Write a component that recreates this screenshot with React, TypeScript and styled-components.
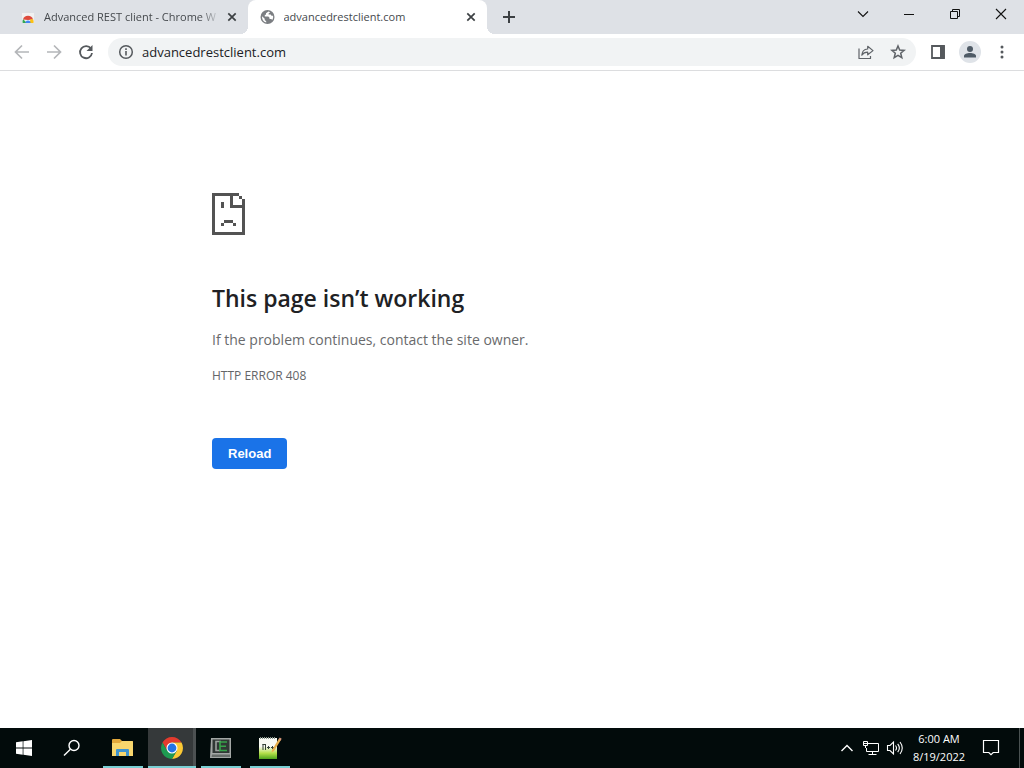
import React from 'react';
import styled, { createGlobalStyle, css } from 'styled-components';

const GlobalStyle = createGlobalStyle`
  *, *::before, *::after { box-sizing: border-box; }
  body { margin: 0; background: #fff; }
  button, input { font: inherit; }
`;

const Screen = styled.div`
  display: flex;
  flex-direction: column;
  min-height: 100vh;
  font-family: 'Open Sans', 'Noto Sans', sans-serif;
  color: #202124;
`;

/* Tab strip */

const TabStrip = styled.header`
  display: flex;
  align-items: stretch;
  height: 34px;
  background: #dee1e6;
`;

const TabList = styled.div`
  display: flex;
  flex: 0 1 487px;
  min-width: 0;
  padding-left: 8px;
`;

const Tab = styled.div<{ $active?: boolean }>`
  position: relative;
  display: flex;
  align-items: center;
  flex: 1 1 0;
  min-width: 0;
  padding: 0 10px 0 12px;
  border-radius: 8px 8px 0 0;
  color: #45494d;
  ${({ $active }) =>
    $active &&
    css`
      background: #fff;
      &::before,
      &::after {
        content: '';
        position: absolute;
        bottom: 0;
        width: 8px;
        height: 8px;
      }
      &::before {
        right: 100%;
        background: radial-gradient(circle at 0 0, transparent 8px, #fff 8px);
      }
      &::after {
        left: 100%;
        background: radial-gradient(circle at 100% 0, transparent 8px, #fff 8px);
      }
    `}
`;

const TabTitle = styled.span<{ $fade?: boolean }>`
  flex: 1;
  min-width: 0;
  margin: 0 6px 0 8px;
  overflow: hidden;
  white-space: nowrap;
  font-size: 11px;
  line-height: 16px;
  ${({ $fade }) =>
    $fade &&
    css`
      mask-image: linear-gradient(to right, #000 calc(100% - 20px), transparent);
    `}
`;

const IconButton = styled.button<{ $w?: number; $h?: number }>`
  display: flex;
  align-items: center;
  justify-content: center;
  flex: none;
  width: ${({ $w = 32 }) => $w}px;
  height: ${({ $h = 32 }) => $h}px;
  padding: 0;
  border: 0;
  background: none;
  color: #5f6368;
`;

const NewTab = styled(IconButton)`
  margin-left: 6px;
  align-self: center;
  color: #3c4043;
`;

const WindowControls = styled.div`
  display: flex;
  margin-left: auto;
  button {
    color: #111;
  }
`;

/* Toolbar */

const Toolbar = styled.div`
  display: flex;
  align-items: center;
  height: 37px;
  padding: 0 6px;
  border-bottom: 1px solid #dcdddf;
  background: #fff;
`;

const AddressBar = styled.form`
  display: flex;
  align-items: center;
  flex: 1;
  min-width: 0;
  height: 28px;
  margin: 0 6px;
  padding: 0 2px 0 10px;
  border-radius: 14px;
  background: #f1f3f4;
`;

const AddressInput = styled.input`
  flex: 1;
  min-width: 0;
  margin-left: 8px;
  padding: 0;
  border: 0;
  outline: 0;
  background: none;
  color: #202124;
  font-size: 13px;
  line-height: 20px;
`;

const Avatar = styled.span`
  display: flex;
  align-items: center;
  justify-content: center;
  width: 22px;
  height: 22px;
  border-radius: 50%;
  background: #dfe3e8;
`;

/* Error page */

const Page = styled.main`
  flex: 1;
  padding: 122px 24px 48px;
`;

const ErrorContent = styled.section`
  max-width: 600px;
  margin: 0 auto;
`;

const Heading = styled.h1`
  margin: 47px 0 14px;
  font-size: 23px;
  font-weight: 600;
  line-height: 32px;
`;

const Message = styled.p`
  margin: 0;
  color: #696a6c;
  font-size: 14px;
  line-height: 24px;
`;

const ErrorCode = styled.p`
  margin: 12px 0 0;
  color: #646568;
  font-size: 12px;
  line-height: 24px;
`;

const ReloadButton = styled.button`
  display: block;
  margin-top: 50px;
  padding: 0 16px;
  border: 0;
  border-radius: 4px;
  background: #1a73e8;
  color: #fff;
  font-family: 'Liberation Sans', sans-serif;
  font-size: 13px;
  font-weight: 700;
  line-height: 31px;
`;

/* Taskbar */

const Taskbar = styled.footer`
  display: flex;
  height: 40px;
  background: #020b0b;
  color: #fff;
`;

const TaskButton = styled.button<{ $running?: boolean; $active?: boolean }>`
  display: flex;
  align-items: center;
  justify-content: center;
  flex: none;
  width: ${({ $running }) => ($running ? 40 : 48)}px;
  height: 40px;
  padding: 0;
  border: 0;
  background: none;
  color: #fff;
  ${({ $running }) => $running && 'box-shadow: inset 0 -2px #79cfd3;'}
  ${({ $active }) =>
    $active && 'width: 48px; margin: 0 -4px; background: linear-gradient(to right, #35393a 45px, #4c5152 45px);'}
`;

const RunningApps = styled.div`
  display: flex;
  margin-left: 7px;
  gap: 9px;
`;

const Tray = styled.div`
  display: flex;
  align-items: center;
  margin-left: auto;
  margin-right: 4px;
  padding-right: 8px;
  border-right: 1px solid #4a5252;
  button {
    color: #fff;
  }
`;

const Clock = styled.time`
  width: 64px;
  font-size: 11px;
  line-height: 18px;
  text-align: center;
  white-space: nowrap;
`;

/* Icons */

const StoreIcon = () => (
  <svg width="16" height="16" viewBox="0 0 16 16" aria-hidden="true">
    <path d="M2 4h12v10H2z" fill="#f1f1f1" />
    <path d="M6 4V3h4v1" fill="none" stroke="#ddd" />
    <path d="M3 10.500a5.200 5.200 0 0 1 10 0L8 11z" fill="#de4a3c" />
    <path d="M2.600 14a5.600 5.600 0 0 1 .5-3.800L7 14z" fill="#35a853" />
    <path d="M9.500 14l1-3.700h2.600a6 6 0 0 1 .4 3.700z" fill="#fbc116" />
    <path d="M5.400 14a2.600 2.600 0 0 1 5.200 0z" fill="#4285f4" />
  </svg>
);

const GlobeIcon = () => (
  <svg width="16" height="16" viewBox="0 0 16 16" aria-hidden="true">
    <circle cx="7.500" cy="8" r="7" fill="#7b7e82" />
    <path d="M8.400 2.600 6 4.300v1.500H4.800v1.700h3.500l1.200 1.200v1.400h1.800l.9.900a5.400 5.400 0 0 0 .9-4.300l-1.600.1-.8-1.200H8.600V4.400l1.600-1.100zM2.100 7.200l2.600 2.600v1.200l1.500 1.300v1.200A5.400 5.400 0 0 1 2.100 7.200z" fill="#fff" />
  </svg>
);

const CloseIcon = () => (
  <svg width="10" height="10" viewBox="0 0 10 10" fill="none" stroke="#3c4043" strokeWidth="1.700" aria-hidden="true">
    <path d="m1.300 1.300 7.400 7.400M8.700 1.300 1.300 8.700" />
  </svg>
);

const PlusIcon = () => (
  <svg width="14" height="14" viewBox="0 0 14 14" fill="none" stroke="currentColor" strokeWidth="2" aria-hidden="true">
    <path d="M7 1v12M1 7h12" />
  </svg>
);

const ChevronIcon = () => (
  <svg width="12" height="12" viewBox="0 0 12 12" fill="none" stroke="currentColor" strokeWidth="1.100" aria-hidden="true">
    <path d="m1 3.500 5 5 5-5" />
  </svg>
);

const MinimizeIcon = () => (
  <svg width="12" height="12" viewBox="0 0 12 12" fill="none" stroke="currentColor" aria-hidden="true">
    <path d="M1 6.500h10" />
  </svg>
);

const RestoreIcon = () => (
  <svg width="12" height="12" viewBox="0 0 12 12" fill="none" stroke="currentColor" aria-hidden="true">
    <path d="M1.500 3.500h7v7h-7zM3.500 3.500v-2h7v7h-2" />
  </svg>
);

const WindowCloseIcon = () => (
  <svg width="12" height="12" viewBox="0 0 12 12" fill="none" stroke="currentColor" strokeWidth="1.100" aria-hidden="true">
    <path d="m1 1 10 10M11 1 1 11" />
  </svg>
);

const ArrowIcon = ({ forward }: { forward?: boolean }) => (
  <svg width="16" height="16" viewBox="0 0 16 16" fill="none" stroke="#b4b6b9" strokeWidth="1.700" aria-hidden="true">
    <path d={forward ? 'M1 8h13M8 1.500 14.500 8 8 14.500' : 'M15 8H2M8 1.500 1.500 8 8 14.500'} />
  </svg>
);

const ReloadIcon = () => (
  <svg width="16" height="16" viewBox="0 0 16 16" fill="none" aria-hidden="true">
    <path d="M13 4.800A6 6 0 1 0 14 9" stroke="#55595d" strokeWidth="1.800" />
    <path d="M14.500 1v6h-6z" fill="#55595d" />
  </svg>
);

const InfoIcon = () => (
  <svg width="16" height="16" viewBox="0 0 16 16" fill="none" stroke="#55595d" strokeWidth="1.500" aria-hidden="true">
    <circle cx="8" cy="8" r="6.300" />
    <path d="M8 7v4.500M8 4.300v1.600" strokeWidth="1.600" />
  </svg>
);

const ShareIcon = () => (
  <svg width="16" height="16" viewBox="0 0 16 16" fill="none" stroke="#5f6368" strokeWidth="1.200" strokeLinejoin="round" aria-hidden="true">
    <path d="M1 4.500v10h11.500V12" />
    <path d="M3.800 11.200C4 7.500 6 5.300 9.700 5V2.300L15 6.600l-5.300 4.200V8.200C7 8.200 5.200 9 3.800 11.200z" />
  </svg>
);

const StarIcon = () => (
  <svg width="16" height="16" viewBox="0 0 16 16" fill="none" stroke="#5f6368" strokeWidth="1.500" aria-hidden="true">
    <path d="m8 2 1.700 4.100 4.400.3-3.400 2.900 1.100 4.300L8 11.300l-3.800 2.300 1.100-4.300L1.900 6.400l4.400-.3z" />
  </svg>
);

const SidePanelIcon = () => (
  <svg width="16" height="16" viewBox="0 0 16 16" aria-hidden="true">
    <path d="M2 2h12v12H2z" fill="none" stroke="#55595d" strokeWidth="1.800" />
    <path d="M10 1.500h4.800v13H10z" fill="#55595d" />
  </svg>
);

const PersonIcon = () => (
  <svg width="14" height="14" viewBox="0 0 14 14" fill="#4f5b66" aria-hidden="true">
    <circle cx="7" cy="4" r="3" />
    <path d="M1 12.500V11c0-2 3-3 6-3s6 1 6 3v1.500z" />
  </svg>
);

const MoreIcon = () => (
  <svg width="16" height="16" viewBox="0 0 16 16" fill="#55595d" aria-hidden="true">
    <circle cx="8" cy="3" r="1.500" />
    <circle cx="8" cy="8" r="1.500" />
    <circle cx="8" cy="13" r="1.500" />
  </svg>
);

const SadPageIcon = styled(({ className }: { className?: string }) => (
  <svg className={className} width="33" height="42" viewBox="0 0 11 14" fill="#535353" shapeRendering="crispEdges" aria-hidden="true">
    <path d="M0 0h9v1H7v3h3V2h1v12H0zM1 1v12h9V5H6V1z" fillRule="evenodd" />
    <path d="M9 1h1v1H9zM3 3h1v2H3zM4 9h3v1H4zM3 10h1v1H3zM7 10h1v1H7z" />
  </svg>
))`
  display: block;
`;

const WindowsIcon = () => (
  <svg width="16" height="16" viewBox="0 0 16 16" fill="#fff" aria-hidden="true">
    <path d="M0 2.300 6.700 1.300v6.300H0zM7.400 1.200 16 0v7.600H7.400zM0 8.400h6.700v6.300L0 13.700zM7.400 8.400H16V16l-8.600-1.200z" />
  </svg>
);

const SearchIcon = () => (
  <svg width="18" height="18" viewBox="0 0 18 18" fill="none" stroke="#fff" strokeWidth="1.400" aria-hidden="true">
    <circle cx="11" cy="6.500" r="5" />
    <path d="M7.400 10.200 1 16.600" />
  </svg>
);

const ExplorerIcon = () => (
  <svg width="22" height="20" viewBox="0 0 22 20" aria-hidden="true">
    <path d="M0 2q0-1 1-1h7l2 2h10q1 0 1 1v14H0z" fill="#e2a83b" />
    <path d="M0 5h8l2-2h10q1 0 1 1v14H0z" fill="#f8d66d" />
    <path d="M4 18v-6q0-1 1-1h11q1 0 1 1v6h-3v-4H7v4z" fill="#3f94cf" />
  </svg>
);

const ChromeIcon = () => (
  <svg width="24" height="24" viewBox="0 0 24 24" aria-hidden="true">
    <path d="M2.500 6.500A11 11 0 0 1 21.500 6.500H12L7.200 14.700z" fill="#e33b2e" />
    <path d="M21.500 6.500A11 11 0 0 1 12 23l4.800-8.200L12 6.500z" fill="#fcc934" />
    <path d="M12 23A11 11 0 0 1 2.500 6.500l4.700 8.200h9.600z" fill="#1e9a51" />
    <circle cx="12" cy="12" r="5.500" fill="#fff" />
    <circle cx="12" cy="12" r="4.400" fill="#2474e5" />
  </svg>
);

const CmderIcon = () => (
  <svg width="22" height="22" viewBox="0 0 22 22" aria-hidden="true">
    <path d="M1 1h20v20H0z" fill="#a3a7a5" />
    <path d="M2.500 2.500h17v13.500h-17z" fill="#303735" />
    <path d="M2 17.500h18V20H1.500z" fill="#676d6a" />
    <path d="M11 4.500H6v9h4" fill="none" stroke="#9ba19e" strokeWidth="1.600" />
    <path d="M17 5h-7v8.500h7M10 9.300h6" fill="none" stroke="#37a34a" strokeWidth="1.600" />
  </svg>
);

const NotepadIcon = () => (
  <svg width="24" height="24" viewBox="0 0 24 24" aria-hidden="true">
    <defs>
      <linearGradient id="note" x1="0" y1="0" x2="0" y2="1">
        <stop offset=".4" stopColor="#f8faf3" />
        <stop offset=".72" stopColor="#b5e04b" />
        <stop offset="1" stopColor="#4ea51c" />
      </linearGradient>
    </defs>
    <path d="M1 2h18v21H1z" fill="url(#note)" />
    <path d="M2 2h16" stroke="#89958c" strokeWidth="2" strokeDasharray="1 1" />
    <path d="M5 8v6M7.500 8v6M4.500 8.500h3.500M9 11.500h3M13 11.500h3M10.500 10v3M14.500 10v3" stroke="#344136" />
    <path d="m14 14 7-11.500 2 1.200-7 11.300-2.500 1.500z" fill="#e8b04b" />
    <path d="m20.500 3.500 1.200-2 2 1.200-1.200 2z" fill="#d8977a" />
  </svg>
);

const TrayChevronIcon = () => (
  <svg width="14" height="14" viewBox="0 0 14 14" fill="none" stroke="#fff" strokeWidth="1.400" aria-hidden="true">
    <path d="m1.500 10 5.500-5.500 5.500 5.500" />
  </svg>
);

const NetworkIcon = () => (
  <svg width="18" height="16" viewBox="0 0 18 16" fill="none" stroke="#fff" aria-hidden="true">
    <path d="M6 3.500h10.500v8h-12V8M10.500 11.500v3M6.500 14.500h8M1.500 1.500h4v4h-4zM3.500 5.500v2.500M1.500 3.500h4" />
  </svg>
);

const VolumeIcon = () => (
  <svg width="18" height="16" viewBox="0 0 18 16" fill="none" stroke="#fff" strokeWidth="1.100" aria-hidden="true">
    <path d="M1.500 5.500h2.500l3.500-3.500v12L4 10.500H1.500zM9.500 5.500q2 2.500 0 5M11.700 3.800q3.300 4.200 0 8.400M14 2q4.500 6 0 12" />
  </svg>
);

const NotificationIcon = () => (
  <svg width="18" height="18" viewBox="0 0 18 18" fill="none" stroke="#fff" strokeWidth="1.200" aria-hidden="true">
    <path d="M1.500 1.500h15v12h-5.300L9 15.700l-2.200-2.200H1.500z" />
  </svg>
);

export default function App() {
  return (
    <Screen>
      <GlobalStyle />
      <TabStrip>
        <TabList>
          <Tab>
            <StoreIcon />
            <TabTitle $fade>Advanced REST client - Chrome W</TabTitle>
            <IconButton $w={12} $h={16} aria-label="Close tab"><CloseIcon /></IconButton>
          </Tab>
          <Tab $active>
            <GlobeIcon />
            <TabTitle>advancedrestclient.com</TabTitle>
            <IconButton $w={12} $h={16} aria-label="Close tab"><CloseIcon /></IconButton>
          </Tab>
        </TabList>
        <NewTab aria-label="New tab"><PlusIcon /></NewTab>
        <WindowControls>
          <IconButton $w={46} $h={28} aria-label="Search tabs"><ChevronIcon /></IconButton>
          <IconButton $w={46} $h={28} aria-label="Minimize"><MinimizeIcon /></IconButton>
          <IconButton $w={46} $h={28} aria-label="Restore"><RestoreIcon /></IconButton>
          <IconButton $w={46} $h={28} aria-label="Close window"><WindowCloseIcon /></IconButton>
        </WindowControls>
      </TabStrip>

      <Toolbar>
        <IconButton aria-label="Back"><ArrowIcon /></IconButton>
        <IconButton aria-label="Forward"><ArrowIcon forward /></IconButton>
        <IconButton aria-label="Reload page"><ReloadIcon /></IconButton>
        <AddressBar>
          <InfoIcon />
          <AddressInput type="text" aria-label="Address" defaultValue="advancedrestclient.com" />
          <IconButton type="button" aria-label="Share"><ShareIcon /></IconButton>
          <IconButton type="button" aria-label="Bookmark"><StarIcon /></IconButton>
        </AddressBar>
        <IconButton aria-label="Side panel"><SidePanelIcon /></IconButton>
        <IconButton aria-label="Profile"><Avatar><PersonIcon /></Avatar></IconButton>
        <IconButton aria-label="Menu"><MoreIcon /></IconButton>
      </Toolbar>

      <Page>
        <ErrorContent>
          <SadPageIcon />
          <Heading>This page isn’t working</Heading>
          <Message>If the problem continues, contact the site owner.</Message>
          <ErrorCode>HTTP ERROR 408</ErrorCode>
          <ReloadButton>Reload</ReloadButton>
        </ErrorContent>
      </Page>

      <Taskbar>
        <TaskButton aria-label="Start"><WindowsIcon /></TaskButton>
        <TaskButton aria-label="Search"><SearchIcon /></TaskButton>
        <RunningApps>
          <TaskButton $running aria-label="File Explorer"><ExplorerIcon /></TaskButton>
          <TaskButton $running $active aria-label="Chrome"><ChromeIcon /></TaskButton>
          <TaskButton $running aria-label="Terminal"><CmderIcon /></TaskButton>
          <TaskButton $running aria-label="Text editor"><NotepadIcon /></TaskButton>
        </RunningApps>
        <Tray>
          <IconButton $w={24} aria-label="Show hidden icons"><TrayChevronIcon /></IconButton>
          <IconButton $w={24} aria-label="Network"><NetworkIcon /></IconButton>
          <IconButton $w={24} aria-label="Volume"><VolumeIcon /></IconButton>
          <Clock>6:00 AM<br />8/19/2022</Clock>
          <IconButton $w={40} aria-label="Notifications"><NotificationIcon /></IconButton>
        </Tray>
      </Taskbar>
    </Screen>
  );
}
